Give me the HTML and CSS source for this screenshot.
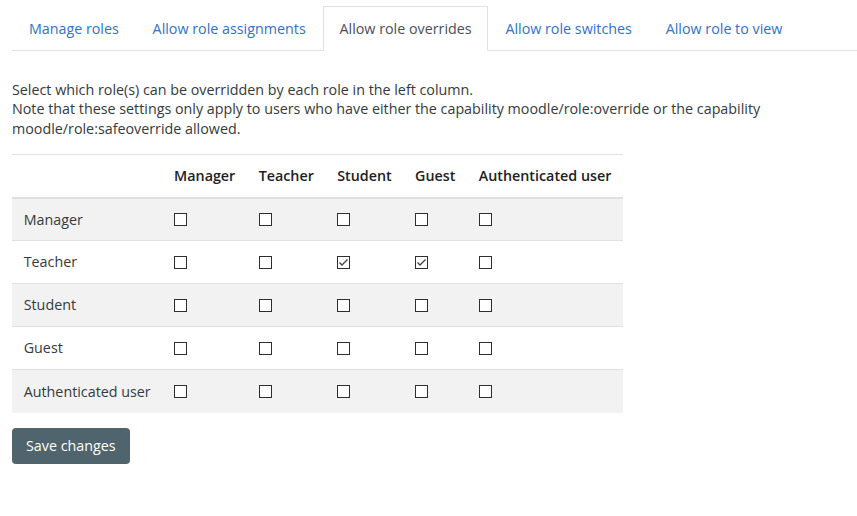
FILE: index.html
```html
<!DOCTYPE html>
<html lang="en">
<head>
    <meta charset="UTF-8">
    <meta name="viewport" content="width=device-width, initial-scale=1.0">
    <title>Allow role overrides</title>
    <link rel="stylesheet" href="styles.css">
</head>
<body>
 <main>
    <ul class="tabs">
        <li><a href="#" class="tab">Manage roles</a></li>
        <li><a href="#" class="tab">Allow role assignments</a></li>
        <li><a href="#" class="tab active">Allow role overrides</a></li>
        <li><a href="#" class="tab">Allow role switches</a></li>
        <li><a href="#" class="tab">Allow role to view</a></li>
    </ul>

    <p class="intro">
        Select which role(s) can be overridden by each role in the left column.<br>
        Note that these settings only apply to users who have either the capability moodle/role:override or the capability moodle/role:safeoverride allowed.
    </p>

    <form>
        <table class="roles">
            <thead>
                <tr>
                    <th></th>
                    <th>Manager</th>
                    <th>Teacher</th>
                    <th>Student</th>
                    <th>Guest</th>
                    <th>Authenticated user</th>
                </tr>
            </thead>
            <tbody>
                <tr>
                    <td>Manager</td>
                    <td><input type="checkbox"></td>
                    <td><input type="checkbox"></td>
                    <td><input type="checkbox"></td>
                    <td><input type="checkbox"></td>
                    <td><input type="checkbox"></td>
                </tr>
                <tr>
                    <td>Teacher</td>
                    <td><input type="checkbox"></td>
                    <td><input type="checkbox"></td>
                    <td><input type="checkbox" checked></td>
                    <td><input type="checkbox" checked></td>
                    <td><input type="checkbox"></td>
                </tr>
                <tr>
                    <td>Student</td>
                    <td><input type="checkbox"></td>
                    <td><input type="checkbox"></td>
                    <td><input type="checkbox"></td>
                    <td><input type="checkbox"></td>
                    <td><input type="checkbox"></td>
                </tr>
                <tr>
                    <td>Guest</td>
                    <td><input type="checkbox"></td>
                    <td><input type="checkbox"></td>
                    <td><input type="checkbox"></td>
                    <td><input type="checkbox"></td>
                    <td><input type="checkbox"></td>
                </tr>
                <tr>
                    <td>Authenticated user</td>
                    <td><input type="checkbox"></td>
                    <td><input type="checkbox"></td>
                    <td><input type="checkbox"></td>
                    <td><input type="checkbox"></td>
                    <td><input type="checkbox"></td>
                </tr>
            </tbody>
        </table>

        <button type="submit" class="save-btn">Save changes</button>
    </form>
 </main>
</body>
</html>
```

FILE: styles.css
```css
*{
    box-sizing: border-box;
}
body{
    margin: 0;
    padding: 6px 0 0 12px;
    font-family: "Open Sans", "Liberation Sans", sans-serif;
    font-size: 14.3px;
    line-height: 19.5px;
    color: #343a40;
    background-color: #fff;
}
.tabs{
    display: flex;
    list-style: none;
    margin: 0;
    padding: 0;
    border-bottom: 1px solid #dee2e6;
}
.tabs li{
    margin-bottom: -1px;
}
.tab{
    display: block;
    padding: 12px 15.9px 11px;
    border: 1px solid transparent;
    color: #2f72c8;
    text-decoration: none;
}
.tab.active{
    color: #495057;
    border-color: #dee2e6 #dee2e6 #fff;
    background-color: #fff;
}
.intro{
    margin: 29px 0 16px;
}
.roles{
    border-collapse: collapse;
    margin-bottom: 15px;
}
.roles th,
.roles td{
    padding: 11px 11.7px;
    height: 43px;
    text-align: left;
    vertical-align: middle;
    border-top: 1px solid #dee2e6;
}
.roles th{
    font-weight: 600;
    color: #1d2125;
    border-bottom: 2px solid #dee2e6;
}
.roles tbody tr:nth-child(odd){
    background-color: #f2f2f2;
}
.roles input{
    appearance: none;
    -webkit-appearance: none;
    display: block;
    width: 13px;
    height: 13px;
    margin: 0;
    border: 1px solid #2e2e2e;
    background-color: #fff;
}
.roles input:checked{
    background-image: url("data:image/svg+xml,%3Csvg xmlns='http://www.w3.org/2000/svg' viewBox='0 0 11 11'%3E%3Cpath d='M1.5 5.5 L4 8 L9.5 2.5' fill='none' stroke='%23444' stroke-width='1.4'/%3E%3C/svg%3E");
    background-size: 11px 11px;
}
.save-btn{
    display: block;
    padding: 8.5px 14px;
    border: 0;
    border-radius: 4px;
    font-family: inherit;
    font-size: 14.3px;
    line-height: 19.5px;
    color: #fff;
    background-color: #4f646c;
    cursor: pointer;
}
```
